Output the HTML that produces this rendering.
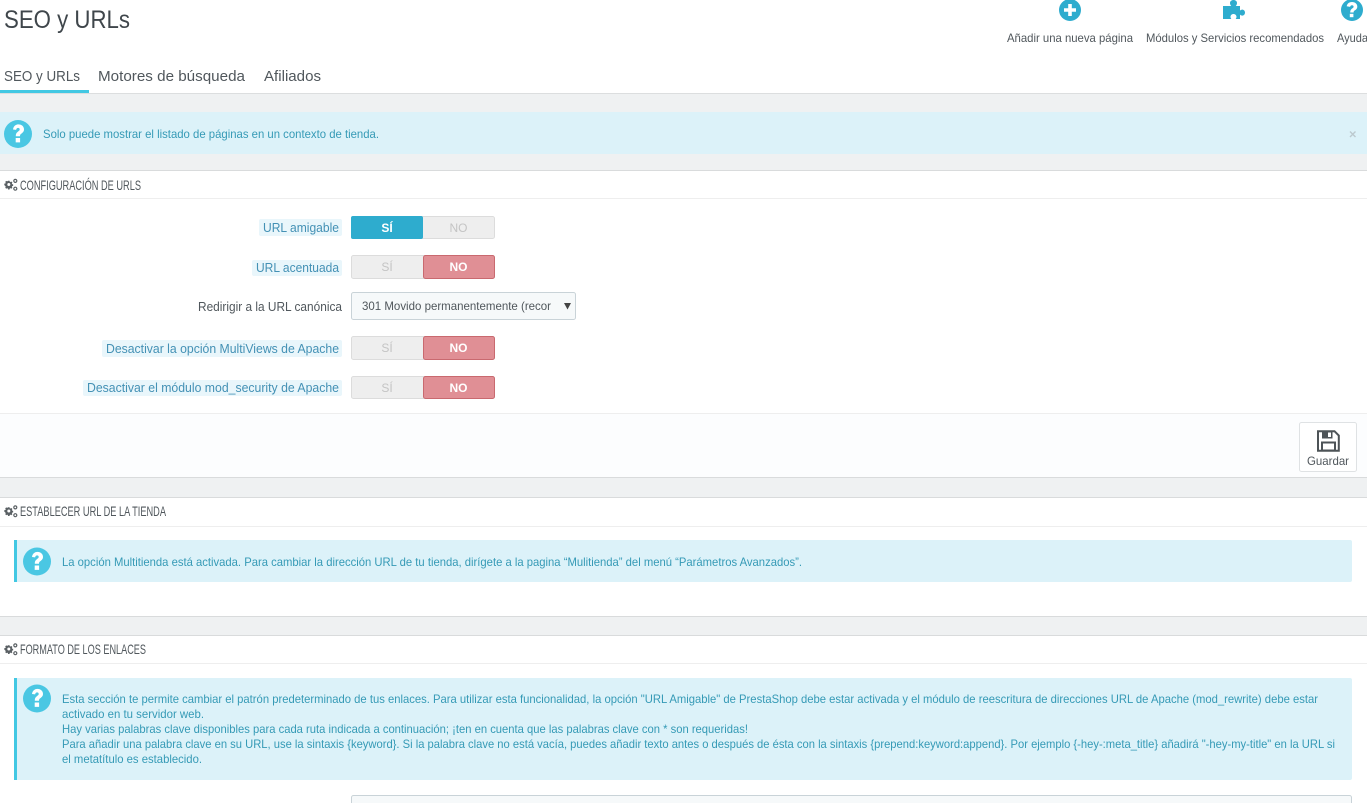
<!DOCTYPE html>
<html lang="es">
<head>
<meta charset="utf-8">
<title>SEO y URLs</title>
<style>
html,body{margin:0;padding:0;width:1367px;height:803px;overflow:hidden;background:#eff1f2}
svg{position:absolute;left:0;top:0;display:block}
text{font-family:"Liberation Sans",sans-serif;white-space:pre}
.a{font-size:12px;fill:#359ab6}
.h{font-size:13px;fill:#50575c}
.hd{font-size:14px;fill:#50575c}
.l{font-size:13px;fill:#4491b5}
.t{font-size:15px;fill:#50575c}
.top{font-size:12px;fill:#50575c}
.b{font-size:12px;font-weight:bold;text-anchor:middle}
.n{font-size:12px;font-weight:normal;text-anchor:middle;fill:#c4c4c4}
</style>
</head>
<body>
<svg width="1367" height="803" viewBox="0 0 1367 803" xmlns="http://www.w3.org/2000/svg">
<defs>
<g id="g" fill="#5a6064">
<path transform="translate(0.3 0.6) scale(.75)" d="M5 2.2h2l.3 1.3 1 .4 1.1-.7 1.4 1.4-.7 1.1.4 1 1.3.3v2l-1.3.3-.4 1 .7 1.1-1.4 1.4-1.1-.7-1 .4-.3 1.3H5l-.3-1.3-1-.4-1.1.7-1.4-1.4.7-1.1-.4-1L0 8.1v-2l1.500-.3.4-1-.7-1.1 1.4-1.4 1.1.7 1-.4zM6 5.200a2 2 0 100 4 2 2 0 000-4z" fill-rule="evenodd"/>
<circle cx="11.300" cy="2.400" r="1.500" fill="none" stroke="#5a6064" stroke-width="1.200"/>
<circle cx="11.300" cy="10.200" r="1.500" fill="none" stroke="#5a6064" stroke-width="1.200"/>
</g>
<g id="q">
<circle r="14" fill="#4ac7e3"/>
<path d="M-5-4.500C-4.600-8-2-9.600.4-9.600c3.400 0 5.600 2.200 5.600 5 0 2.200-1.200 3.200-2.600 4.200C2.300.4 2 .9 2 2.200h-4.200c0-2.400.6-3.400 2.200-4.600 1-.8 1.700-1.200 1.700-2.100 0-1-.7-1.600-1.600-1.600-1 0-1.700.6-2 2z M-2.300 4h4.400v4.400h-4.400z" fill="#fff"/>
</g>
</defs>

<!-- page header -->
<rect x="0" y="0" width="1367" height="93" fill="#fff"/>
<rect x="0" y="93" width="1367" height="1" fill="#dcdedf"/>
<rect x="0" y="90" width="89" height="3" fill="#42c8e3"/>
<text x="4" y="28" font-size="25" fill="#3f464b" textLength="126" lengthAdjust="spacingAndGlyphs">SEO y URLs</text>
<text class="t" x="4" y="81" textLength="76" lengthAdjust="spacingAndGlyphs">SEO y URLs</text>
<text class="t" x="98" y="81" textLength="147" lengthAdjust="spacingAndGlyphs">Motores de búsqueda</text>
<text class="t" x="264" y="81" textLength="57" lengthAdjust="spacingAndGlyphs">Afiliados</text>

<!-- toolbar icons -->
<circle cx="1070" cy="10" r="11" fill="#2eacce"/>
<path d="M1068.200 4h3.600v4.200h4.200v3.600h-4.200v4.200h-3.600v-4.200h-4.200v-3.600h4.200z" fill="#fff"/>
<path d="M1223 6h8.200c-.8-1-1.200-1.800-1.200-3 0-1.800 1.500-3 3.500-3s3.500 1.200 3.500 3c0 1.200-.4 2-1.200 3h4.200v4.600c.6-.6 1.400-1 2.200-1 1.600 0 2.800 1.300 2.800 3s-1.200 3-2.800 3c-.8 0-1.600-.4-2.200-1V19h-4.300c.5-.7.800-1.400.8-2.200 0-1.600-1.300-2.800-3-2.800s-3 1.200-3 2.800c0 .8.300 1.500.8 2.200H1223z" fill="#2eacce"/>
<circle cx="1352" cy="10" r="11" fill="#2eacce"/>
<path d="M1346.700 6.200c.5-2.800 2.700-4.200 5.300-4.200 3.200 0 5.300 2 5.300 4.500 0 2-1 2.900-2.300 3.800-1.100.8-1.400 1.200-1.400 2.200h-3.400c0-2.100.6-3 1.900-4 .9-.7 1.500-1 1.500-1.800 0-.9-.7-1.500-1.600-1.500-1 0-1.700.6-1.900 1.700z" fill="#fff"/>
<rect x="1349.800" y="13.800" width="3.600" height="3.400" fill="#fff"/>
<text class="top" x="1007" y="42" textLength="126" lengthAdjust="spacingAndGlyphs">Añadir una nueva página</text>
<text class="top" x="1146" y="42" textLength="178" lengthAdjust="spacingAndGlyphs">Módulos y Servicios recomendados</text>
<text class="top" x="1337" y="42" textLength="31" lengthAdjust="spacingAndGlyphs">Ayuda</text>

<!-- info bar -->
<rect x="0" y="112" width="1367" height="42" fill="#dcf2f9"/>
<use href="#q" transform="translate(18 134)"/>
<text class="a" x="43" y="138" textLength="336" lengthAdjust="spacingAndGlyphs">Solo puede mostrar el listado de páginas en un contexto de tienda.</text>
<path d="M1350 131.500l5.500 5.500M1355.500 131.500l-5.500 5.500" stroke="#bcc9ce" stroke-width="1.400" fill="none"/>

<!-- panel 1 -->
<rect x="0" y="170" width="1367" height="308" fill="#fff"/>
<rect x="0" y="170" width="1367" height="1" fill="#d9dbdc"/>
<rect x="0" y="198" width="1367" height="1" fill="#eeeeee"/>
<use href="#g" transform="translate(4 178.500)"/>
<text class="hd" x="20" y="190" textLength="121" lengthAdjust="spacingAndGlyphs">CONFIGURACIÓN DE URLS</text>

<!-- labels -->
<rect x="259" y="219" width="83" height="17" rx="2" fill="#e9f6fb"/>
<text class="l" x="263" y="232" textLength="76" lengthAdjust="spacingAndGlyphs">URL amigable</text>
<rect x="252" y="260" width="90" height="16" rx="2" fill="#e9f6fb"/>
<text class="l" x="256" y="272" textLength="83" lengthAdjust="spacingAndGlyphs">URL acentuada</text>
<text class="h" x="198" y="311" textLength="144" lengthAdjust="spacingAndGlyphs">Redirigir a la URL canónica</text>
<rect x="102" y="340" width="240" height="17" rx="2" fill="#e9f6fb"/>
<text class="l" x="106" y="353" textLength="233" lengthAdjust="spacingAndGlyphs">Desactivar la opción MultiViews de Apache</text>
<rect x="83" y="380" width="259" height="16" rx="2" fill="#e9f6fb"/>
<text class="l" x="87" y="392" textLength="252" lengthAdjust="spacingAndGlyphs">Desactivar el módulo mod_security de Apache</text>

<!-- switch 1 -->
<rect x="351.500" y="216.500" width="143" height="22" rx="2" fill="#eeeeee" stroke="#dcdcdc"/>
<rect x="351" y="216" width="72" height="23" rx="2" fill="#2eacce"/>
<text class="b" x="387" y="232" fill="#fff">SÍ</text>
<text class="n" x="458.500" y="232">NO</text>

<!-- switch 2 -->
<rect x="351.500" y="255.500" width="143" height="23" rx="2" fill="#eeeeee" stroke="#dcdcdc"/>
<rect x="423.500" y="255.500" width="71" height="23" rx="2" fill="#e08f95" stroke="#c9696f"/>
<text class="n" x="387" y="271">SÍ</text>
<text class="b" x="458.500" y="271" fill="#fff">NO</text>

<!-- select -->
<rect x="351.500" y="292.500" width="224" height="27" rx="2" fill="#f6f9fa" stroke="#c9d3d8"/>
<text class="h" x="362" y="310" style="font-size:12px" textLength="189" lengthAdjust="spacingAndGlyphs">301 Movido permanentemente (recor</text>
<path d="M564 303h7l-3.500 6.500z" fill="#444"/>

<!-- switch 3 -->
<rect x="351.500" y="336.500" width="143" height="23" rx="2" fill="#eeeeee" stroke="#dcdcdc"/>
<rect x="423.500" y="336.500" width="71" height="23" rx="2" fill="#e08f95" stroke="#c9696f"/>
<text class="n" x="387" y="352">SÍ</text>
<text class="b" x="458.500" y="352" fill="#fff">NO</text>

<!-- switch 4 -->
<rect x="351.500" y="376.500" width="143" height="22" rx="2" fill="#eeeeee" stroke="#dcdcdc"/>
<rect x="423.500" y="376.500" width="71" height="22" rx="2" fill="#e08f95" stroke="#c9696f"/>
<text class="n" x="387" y="392">SÍ</text>
<text class="b" x="458.500" y="392" fill="#fff">NO</text>

<!-- panel 1 footer -->
<rect x="0" y="413" width="1367" height="1" fill="#eeeeee"/>
<rect x="0" y="414" width="1367" height="63" fill="#fcfdfe"/>
<rect x="0" y="477" width="1367" height="1" fill="#d9dbdc"/>
<rect x="1299.500" y="422.500" width="57" height="49" rx="2" fill="#fff" stroke="#dfe2e4"/>
<path d="M1318 431.200h16.500l4.300 4.300v15.300h-20.800z" fill="none" stroke="#4d5357" stroke-width="2"/>
<path d="M1322 431h10.500v7.500h-10.500z" fill="#4d5357"/>
<rect x="1328" y="432.500" width="3" height="4.500" fill="#fff"/>
<rect x="1322" y="442.500" width="13" height="8" fill="#fff" stroke="#4d5357" stroke-width="2"/>
<text class="top" x="1307" y="465" textLength="42" lengthAdjust="spacingAndGlyphs">Guardar</text>

<!-- panel 2 -->
<rect x="0" y="497" width="1367" height="120" fill="#fff"/>
<rect x="0" y="497" width="1367" height="1" fill="#d9dbdc"/>
<rect x="0" y="526" width="1367" height="1" fill="#eeeeee"/>
<use href="#g" transform="translate(4 505)"/>
<text class="hd" x="20" y="516" textLength="146" lengthAdjust="spacingAndGlyphs">ESTABLECER URL DE LA TIENDA</text>
<rect x="14" y="540" width="1338" height="42" rx="2" fill="#dcf2f9"/>
<rect x="14" y="540" width="3" height="42" fill="#42c8e3"/>
<use href="#q" transform="translate(37 561.500)"/>
<text class="a" x="62" y="566" textLength="740" lengthAdjust="spacingAndGlyphs">La opción Multitienda está activada. Para cambiar la dirección URL de tu tienda, dirígete a la pagina “Mulitienda” del menú “Parámetros Avanzados”.</text>
<rect x="0" y="616" width="1367" height="1" fill="#d9dbdc"/>

<!-- panel 3 -->
<rect x="0" y="635" width="1367" height="168" fill="#fff"/>
<rect x="0" y="635" width="1367" height="1" fill="#d9dbdc"/>
<rect x="0" y="663" width="1367" height="1" fill="#eeeeee"/>
<use href="#g" transform="translate(4 643)"/>
<text class="hd" x="20" y="654" textLength="126" lengthAdjust="spacingAndGlyphs">FORMATO DE LOS ENLACES</text>
<rect x="14" y="678" width="1338" height="102" rx="2" fill="#dcf2f9"/>
<rect x="14" y="678" width="3" height="102" fill="#42c8e3"/>
<use href="#q" transform="translate(37 698.500)"/>
<text class="a" x="62" y="703" textLength="1256" lengthAdjust="spacingAndGlyphs">Esta sección te permite cambiar el patrón predeterminado de tus enlaces. Para utilizar esta funcionalidad, la opción "URL Amigable" de PrestaShop debe estar activada y el módulo de reescritura de direcciones URL de Apache (mod_rewrite) debe estar</text>
<text class="a" x="62" y="718" textLength="142" lengthAdjust="spacingAndGlyphs">activado en tu servidor web.</text>
<text class="a" x="62" y="733" textLength="686" lengthAdjust="spacingAndGlyphs">Hay varias palabras clave disponibles para cada ruta indicada a continuación; ¡ten en cuenta que las palabras clave con * son requeridas!</text>
<text class="a" x="62" y="748" textLength="1273" lengthAdjust="spacingAndGlyphs">Para añadir una palabra clave en su URL, use la sintaxis {keyword}. Si la palabra clave no está vacía, puedes añadir texto antes o después de ésta con la sintaxis {prepend:keyword:append}. Por ejemplo {-hey-:meta_title} añadirá "-hey-my-title" en la URL si</text>
<text class="a" x="62" y="763" textLength="140" lengthAdjust="spacingAndGlyphs">el metatítulo es establecido.</text>
<rect x="351.500" y="795.500" width="1000" height="20" rx="2" fill="#f6f9fa" stroke="#c9d3d8"/>
</svg>
</body>
</html>
